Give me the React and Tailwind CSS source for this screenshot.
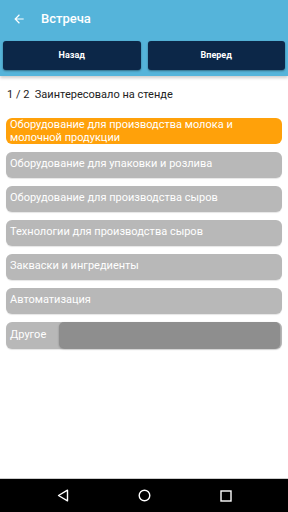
import React from 'react';

const items = [
  'Оборудование для производства молока и молочной продукции',
  'Оборудование для упаковки и розлива',
  'Оборудование для производства сыров',
  'Технологии для производства сыров',
  'Закваски и ингредиенты',
  'Автоматизация',
];

const App = () => {
  return (
    <div className="w-[288px] h-[512px] flex flex-col bg-white overflow-hidden" style={{ fontFamily: 'Roboto, "Noto Sans", sans-serif' }}>
      {/* Header */}
      <div className="bg-[#55b4da] shadow-[0_2px_3px_rgba(0,0,0,0.2)]">
        <div className="h-[38px] flex items-center px-3">
          <svg width="14" height="14" viewBox="0 0 24 24" className="text-white">
            <path d="M20 11H7.83l5.59-5.59L12 4l-8 8 8 8 1.41-1.41L7.83 13H20v-2z" fill="currentColor" />
          </svg>
          <span className="ml-[15px] text-white text-[13px] font-medium">Встреча</span>
        </div>
        <div className="flex gap-[7px] px-[3px] pt-[3px] pb-[6px]">
          <button className="flex-1 h-[29px] bg-[#0c2748] rounded-[3px] text-white text-[9px] font-bold shadow-[0_1px_2px_rgba(0,0,0,0.4)]">Назад</button>
          <button className="flex-1 h-[29px] bg-[#0c2748] rounded-[3px] text-white text-[9px] font-bold shadow-[0_1px_2px_rgba(0,0,0,0.4)]">Вперед</button>
        </div>
      </div>

      {/* Content */}
      <div className="flex-1 px-[6px]">
        <div className="mt-[11px] text-[11px] text-[#222] pl-[1px]">1 / 2&nbsp;&nbsp;Заинтересовало на стенде</div>
        <div className="mt-[14px] flex flex-col gap-[8px]">
          <div className="h-[26px] bg-[#ffa10a] rounded-[6px] px-[4px] text-white text-[11px] leading-[13px] flex items-center">
            {items[0]}
          </div>
          {items.slice(1).map((t) => (
            <div key={t} className="h-[26px] bg-[#b8b8b8] rounded-[6px] px-[4px] text-white text-[11px] flex items-center shadow-[0_1px_1px_rgba(0,0,0,0.1)]">
              {t}
            </div>
          ))}
          <div className="h-[27px] bg-[#b8b8b8] rounded-[6px] pl-[4px] pr-[2px] text-white text-[11px] flex items-center shadow-[0_1px_1px_rgba(0,0,0,0.1)]">
            <span className="w-[49px]">Другое</span>
            <div className="flex-1 h-[26px] bg-[#8e8e8e] rounded-[5px] shadow-[0_1px_2px_rgba(0,0,0,0.3)]" />
          </div>
        </div>
      </div>

      {/* Nav bar */}
      <div className="h-[34px] bg-black flex items-center justify-center gap-[69px] border-t border-[#ccc]">
        <svg width="12" height="13" viewBox="0 0 12 13">
          <path d="M10.5 1.2 L1.5 6.5 L10.5 11.8 Z" fill="none" stroke="white" strokeWidth="1.4" strokeLinejoin="round" />
        </svg>
        <svg width="13" height="13" viewBox="0 0 13 13">
          <circle cx="6.5" cy="6.5" r="5.3" fill="none" stroke="white" strokeWidth="1.4" />
        </svg>
        <svg width="12" height="12" viewBox="0 0 12 12">
          <rect x="1" y="1" width="10" height="10" fill="none" stroke="white" strokeWidth="1.4" />
        </svg>
      </div>
    </div>
  );
};

export default App;
